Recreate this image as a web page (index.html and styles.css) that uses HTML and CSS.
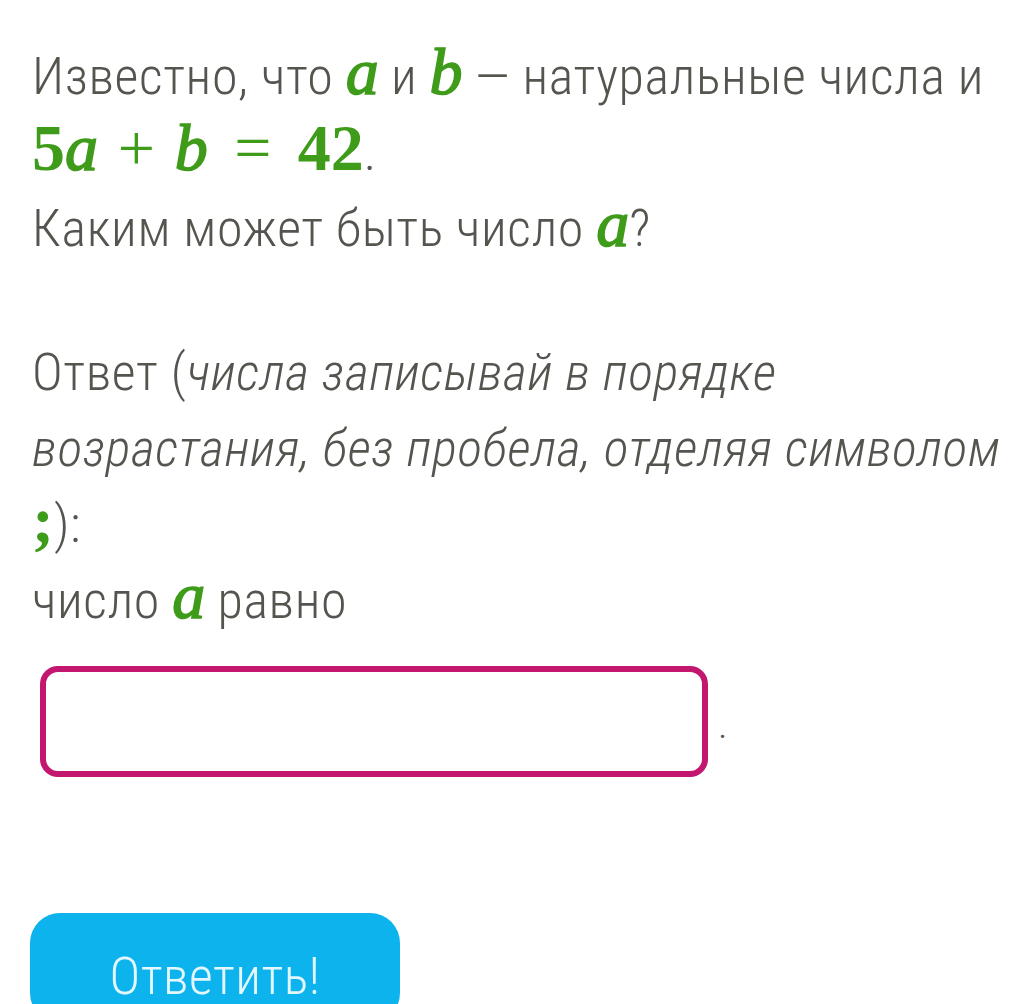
FILE: index.html
```html
<!DOCTYPE html>
<html lang="ru">
<head>
<meta charset="utf-8">
<link rel="stylesheet" href="styles.css">
</head>
<body>
<main class="task">
  <p class="para">Известно, что <span class="m">a</span> и <span class="m">b</span> — натуральные числа и <span class="eq"><span class="mn">5</span><span class="m">a</span><span class="op">+</span><span class="m">b</span><span class="op rel">=</span><span class="mn">42</span></span>.</p>
  <p class="para">Каким может быть число <span class="m">a</span>?</p>
  <p class="para answer">Ответ (<em>числа записывай в порядке возрастания, без пробела, отделяя символом</em> <span class="semi">;</span>):</p>
  <p class="para">число <span class="m">a</span> равно</p>
  <div class="field-row">
    <input class="field" type="text" aria-label="ответ">
    <span class="dot">.</span>
  </div>
  <button class="submit" type="button">Ответить!</button>
</main>
</body>
</html>
```
FILE: styles.css
```css
html, body {
  margin: 0;
  padding: 0;
  background: #ffffff;
  overflow: hidden;
}
body {
  font-family: "Roboto Condensed", Roboto, sans-serif;
  font-weight: 300;
  color: #55554f;
  font-size: 52px;
  line-height: 76px;
  letter-spacing: 0.6px;
}
.task {
  padding: 39px 10px 0 32px;
}
.para {
  margin: 0;
}
.answer {
  margin-top: 68px;
}
.m, .mn, .op, .semi {
  font-family: "Liberation Serif", "DejaVu Serif", serif;
  color: #3f9b1a;
  font-size: 66px;
  line-height: 0;
  letter-spacing: 0;
}
.m {
  font-style: italic;
  font-weight: 400;
  -webkit-text-stroke: 1.6px #3f9b1a;
}
.mn {
  font-weight: 700;
}
.op {
  font-weight: 400;
  margin: 0 0.3em;
}
.op.rel {
  margin: 0 0.4em;
}
.semi {
  font-weight: 700;
}
em {
  font-style: italic;
}
.field-row {
  display: flex;
  align-items: center;
  margin-top: 27px;
  margin-left: 8px;
}
.field {
  box-sizing: border-box;
  width: 668px;
  height: 111px;
  border: 6px solid #c2166f;
  border-radius: 18px;
  background: #fff;
  outline: none;
}
.dot {
  font-size: 40px;
  line-height: 40px;
  margin-left: 10px;
  margin-top: 6px;
}
.submit {
  display: block;
  box-sizing: border-box;
  margin-top: 136px;
  margin-left: -2px;
  width: 370px;
  height: 110px;
  border: none;
  border-radius: 30px;
  background: #0db3ec;
  color: #e3f7ff;
  font-family: inherit;
  font-weight: 300;
  font-size: 52px;
  line-height: 36px;
  letter-spacing: 0.5px;
  padding: 46px 0 28px;
  text-align: center;
  vertical-align: top;
}
```
